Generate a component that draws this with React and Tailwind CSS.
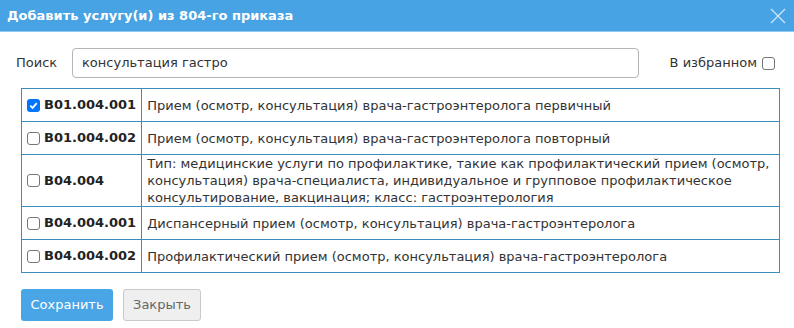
import React from 'react';

const rows = [
    { code: 'B01.004.001', text: 'Прием (осмотр, консультация) врача-гастроэнтеролога первичный', checked: true },
    { code: 'B01.004.002', text: 'Прием (осмотр, консультация) врача-гастроэнтеролога повторный' },
    { code: 'B04.004', text: 'Тип: медицинские услуги по профилактике, такие как профилактический прием (осмотр, консультация) врача-специалиста, индивидуальное и групповое профилактическое консультирование, вакцинация; класс: гастроэнтерология' },
    { code: 'B04.004.001', text: 'Диспансерный прием (осмотр, консультация) врача-гастроэнтеролога' },
    { code: 'B04.004.002', text: 'Профилактический прием (осмотр, консультация) врача-гастроэнтеролога' },
];

const Box = ({ checked }) => (
    checked ? (
        <span className="inline-flex w-[13px] h-[13px] rounded-[3px] bg-[#0075ff] items-center justify-center shrink-0">
            <svg width="11" height="11" viewBox="0 0 12 12">
                <path d="M2.5 6.2 L5 8.6 L9.6 3.4" stroke="#fff" strokeWidth="2" fill="none" />
            </svg>
        </span>
    ) : (
        <span className="inline-block w-[13px] h-[13px] rounded-[3px] border border-[#767676] bg-white shrink-0" />
    )
);

export default function App() {
    return (
        <div className="w-[794px] h-[328px] bg-white text-[13px] text-[#333] font-['Verdana','DejaVu_Sans',sans-serif] overflow-hidden">
            {/* Header */}
            <div className="h-[32px] bg-[#47a3e3] border-b border-[#8fc9f0] flex items-center justify-between pl-[7px] pr-[8px]">
                <span className="text-white font-bold text-[13px]">Добавить услугу(и) из 804-го приказа</span>
                <svg width="16" height="16" viewBox="0 0 16 16">
                    <path d="M1 1 L15 15 M15 1 L1 15" stroke="#cfe8fa" strokeWidth="1.2" />
                </svg>
            </div>

            {/* Search */}
            <div className="flex items-center mt-[16px] pl-[16px] pr-[19px]">
                <span className="w-[56px]">Поиск</span>
                <div className="w-[567px] h-[30px] border border-[#b5b5b5] rounded-[4px] flex items-center px-[9px]">
                    консультация гастро
                </div>
                <div className="ml-auto flex items-center gap-[5px]">
                    <span>В избранном</span>
                    <Box />
                </div>
            </div>

            {/* Table */}
            <table className="mt-[10px] ml-[21px] w-[759px] border-collapse">
                <tbody>
                    {rows.map((r) => (
                        <tr key={r.code}>
                            <td className="border border-[#3b8dbd] w-[120px] h-[33px] px-[5px] align-middle">
                                <div className="flex items-center gap-[4px]">
                                    <Box checked={r.checked} />
                                    <span className="font-bold text-[#222]">{r.code}</span>
                                </div>
                            </td>
                            <td className="border border-[#3b8dbd] px-[5px] py-0 leading-[17px] align-middle">{r.text}</td>
                        </tr>
                    ))}
                </tbody>
            </table>

            {/* Buttons */}
            <div className="flex gap-[10px] mt-[16px] ml-[21px]">
                <button className="w-[92px] h-[32px] rounded-[3px] bg-[#49a5e6] text-white">Сохранить</button>
                <button className="w-[78px] h-[32px] rounded-[3px] bg-[#efefef] border border-[#c9c9c9] text-[#666]">Закрыть</button>
            </div>
        </div>
    );
}
